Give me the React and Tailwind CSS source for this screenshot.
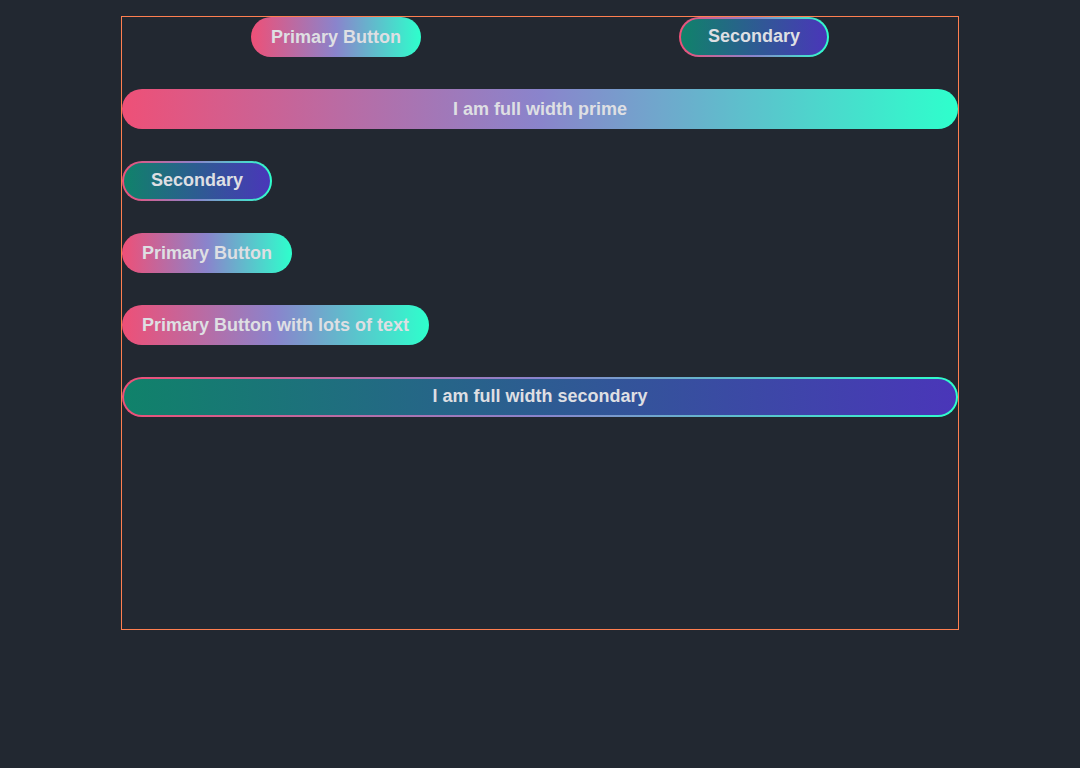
import React from "react";

const font = { fontFamily: '"Liberation Sans", Arial, sans-serif' };

function Primary({ children, full }) {
  return (
    <button
      className={
        (full ? "w-full " : "") +
        "h-10 rounded-full px-5 text-[18px] font-bold text-[#dedfe3] bg-[linear-gradient(to_right,#ee5077,#8a84cc,#2effcc)] whitespace-nowrap"
      }
      style={font}
    >
      {children}
    </button>
  );
}

function Secondary({ children, full }) {
  return (
    <div
      className={
        (full ? "w-full " : "") +
        "h-10 rounded-full p-[2px] bg-[linear-gradient(to_right,#ee5077,#8a84cc,#2effcc)]"
      }
    >
      <button
        className="w-full h-full rounded-full px-[27px] pb-[2px] text-[18px] font-bold text-[#dedfe3] bg-[linear-gradient(to_right,#10826a,#4a36b9)] whitespace-nowrap"
        style={font}
      >
        {children}
      </button>
    </div>
  );
}

export default function App() {
  return (
    <div className="min-h-[768px] bg-[#222831] pt-4">
      <div className="mx-auto w-[838px] h-[614px] border border-[#ff7f50] flex flex-col gap-8">
        <div className="flex justify-around items-start">
          <Primary>Primary Button</Primary>
          <Secondary>Secondary</Secondary>
        </div>
        <Primary full>I am full width prime</Primary>
        <div className="flex">
          <Secondary>Secondary</Secondary>
        </div>
        <div className="flex">
          <Primary>Primary Button</Primary>
        </div>
        <div className="flex">
          <Primary>Primary Button with lots of text</Primary>
        </div>
        <Secondary full>I am full width secondary</Secondary>
      </div>
    </div>
  );
}
